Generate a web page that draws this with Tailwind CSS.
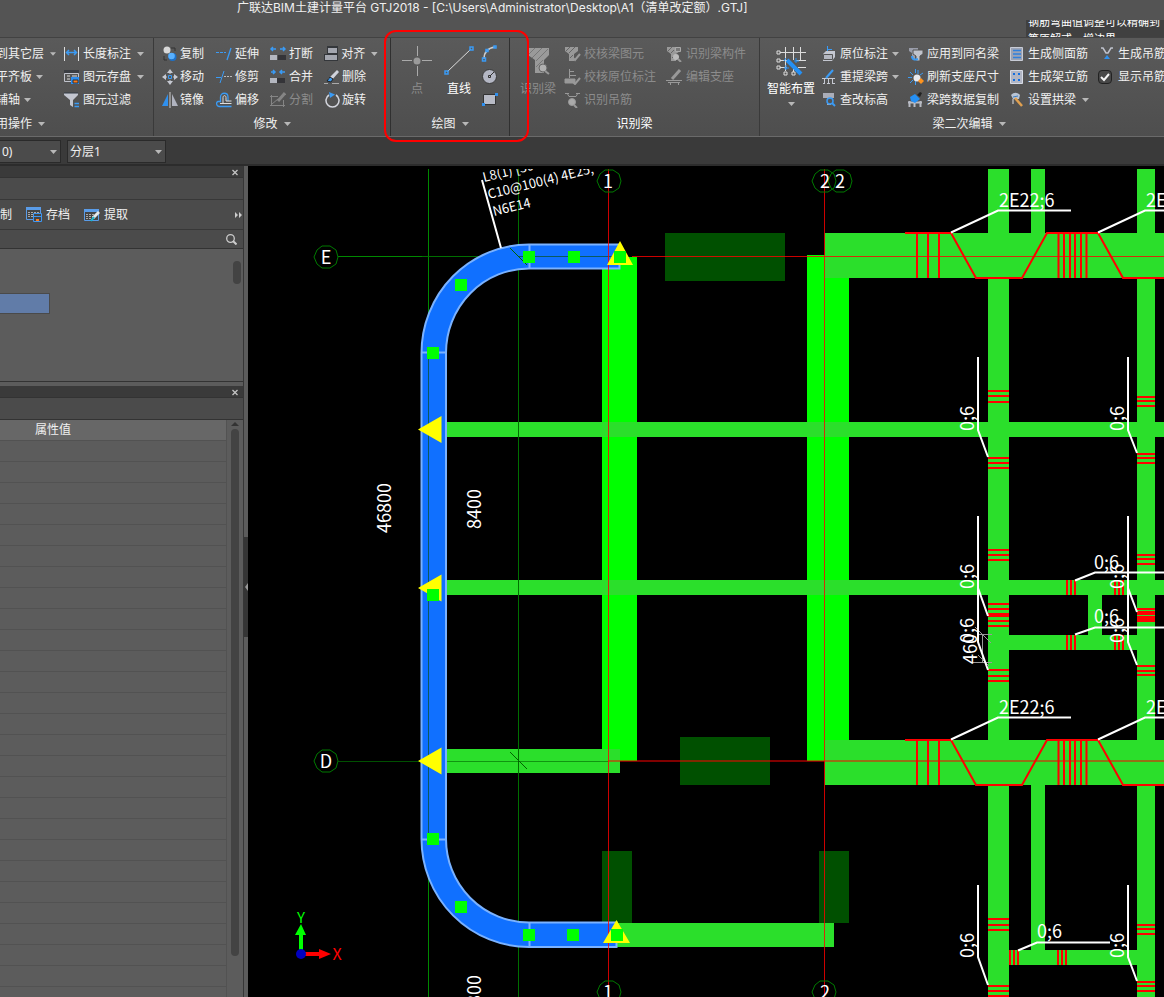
<!DOCTYPE html>
<html lang="zh-CN">
<head>
  <meta charset="UTF-8" />
  <meta name="viewport" content="width=device-width, initial-scale=1.0" />
  <title>广联达BIM土建计量平台 GTJ2018</title>
  <script src="https://cdn.jsdelivr.net/npm/@tailwindcss/browser@4"></script>
</head>

<body class="h-screen flex flex-col overflow-hidden bg-[#5c5c5c] text-xs text-[#f0f0f0] font-['Noto_Sans','Noto_Sans_CJK_SC',sans-serif]">
  <svg class="hidden" aria-hidden="true">
    <symbol id="caret" viewBox="0 0 7 4"><path d="M0 0h7L3.500 4z" fill="#b8b8b8" /></symbol>
    <symbol id="close" viewBox="0 0 8 8"><path d="M1.500 2l5 5M6.500 2l-5 5" stroke="#c4c4c4" stroke-width="1.300" /></symbol>
  </svg>

  <!-- Title bar -->
  <header class="h-[38px] shrink-0 flex justify-between bg-[#545454] border-b border-[#424242]">
    <h1 class="pl-[237px] h-4 leading-4 whitespace-nowrap font-['Inter','Noto_Sans_CJK_SC',sans-serif]">广联达BIM土建计量平台 GTJ2018 - [C:\Users\Administrator\Desktop\A1（清单改定额）.GTJ]</h1>
    <div class="self-end w-[138px] h-[17px] pl-0.5 bg-[#404040] overflow-hidden whitespace-nowrap text-[11px] text-white">
      <p class="-mt-1.5 h-[17px] leading-4">钢筋弯曲值调整可以精确到</p>
      <p class="h-4 leading-4">等原解或，增边界</p>
    </div>
  </header>

  <!-- Ribbon -->
  <nav class="relative h-[99px] shrink-0 flex overflow-hidden bg-gradient-to-b from-[#5a5a5a] to-[#4e4e4e] border-b border-[#6a6a6a] whitespace-nowrap">
    <!-- Common -->
    <section class="w-[154px] shrink-0 pt-1 flex flex-col border-r border-[#3a3a3a]">
      <div class="-ml-1 grid grid-flow-col grid-rows-3 auto-cols-max gap-x-2">
        <button class="h-[23px] flex items-center gap-1 w-15">到其它层<svg class="w-[7px] h-1 ml-0.5"><use href="#caret" /></svg></button>
        <button class="h-[23px] flex items-center gap-1 w-15">平齐板<svg class="w-[7px] h-1"><use href="#caret" /></svg></button>
        <button class="h-[23px] flex items-center gap-1 w-15">辅轴<svg class="w-[7px] h-1"><use href="#caret" /></svg></button>
        <button class="h-[23px] flex items-center gap-1">
          <svg width="15" height="16" fill="none"><path d="M.5 1v14M14.500 1v14" stroke="#ddd" /><path d="M3 6.500h9M5 4L2.500 6.500 5 9M10 4l2.500 2.500L10 9" stroke="#3a9bf5" stroke-width="1.500" /></svg>
          长度标注<svg class="w-[7px] h-1 ml-0.5"><use href="#caret" /></svg></button>
        <button class="h-[23px] flex items-center gap-1">
          <svg width="15" height="16" fill="none"><path d="M0 1h15v3H0z" fill="#3a3d42" /><path d="M.5 4.500h14v8H.5z" stroke="#c0c3cc" /><path d="M3 7h3M3 10h3M8 7h5" stroke="#ddd" /><path d="M7 8h8v7H7z" fill="#2b8cee" /><path d="M9 11h5v3H9z" fill="#ff7a1a" stroke="#333" /></svg>
          图元存盘<svg class="w-[7px] h-1 ml-0.5"><use href="#caret" /></svg></button>
        <button class="h-[23px] flex items-center gap-1">
          <svg width="15" height="16" fill="none"><path d="M0 1h14v2L9 8v7l-3-2V8L0 3z" fill="#c3c6d0" /><path d="M0 1h14" stroke="#333a44" /><path d="M10.500 11.500H15M10.500 14.500H15" stroke="#3a9bf5" stroke-width="1.500" /></svg>
          图元过滤</button>
      </div>
      <button class="-ml-1 h-[26px] flex items-center gap-1.5">用操作<svg class="w-[7px] h-1"><use href="#caret" /></svg></button>
    </section>

    <!-- Modify -->
    <section class="w-[237px] shrink-0 pt-1 flex flex-col border-r border-[#303030]">
      <div class="pl-2 grid grid-flow-col grid-rows-3 auto-cols-[54px]">
        <button class="h-[23px] flex items-center gap-0.5">
          <svg width="16" height="16"><circle cx="5" cy="4" r="3.500" fill="#d8d8d8" /><circle cx="10.500" cy="11" r="4" fill="#1d70c8" /><circle cx="9.500" cy="10" r="3.300" fill="#58b0ff" /><path d="M9 2h4v3M2 10v4h3" fill="none" stroke="#333" /></svg>复制</button>
        <button class="h-[23px] flex items-center gap-0.5">
          <svg width="16" height="16"><path d="M8 0l3 4H5zM8 16l3-4H5zM0 8l4-3v6zM16 8l-4-3v6z" fill="#c6c9d2" /><path d="M8 3v2M8 11v2M3 8h2M11 8h2" stroke="#c6c9d2" /><path d="M6.500 6.500h3v3h-3z" fill="none" stroke="#3a9bf5" /></svg>移动</button>
        <button class="h-[23px] flex items-center gap-0.5">
          <svg width="16" height="16"><path d="M6 2v12H0z" fill="#2f90ee" /><path d="M10 2v12h6z" fill="#b0b3bf" /><path d="M8 0v16" stroke="#ccc" /></svg>镜像</button>
        <button class="h-[23px] flex items-center gap-[3px]">
          <svg width="16" height="16" fill="none"><path d="M0 6.500h10" stroke="#3a9bf5" stroke-dasharray="3 1" /><path d="M15 2l-4 12" stroke="#3a9bf5" stroke-width="1.300" /></svg>延伸</button>
        <button class="h-[23px] flex items-center gap-[3px]">
          <svg width="16" height="16" fill="none"><path d="M0 8.500h5" stroke="#3a9bf5" /><path d="M8 7.500h8" stroke="#bbb" stroke-dasharray="2 1" /><path d="M8 2L4 14" stroke="#3a9bf5" /></svg>修剪</button>
        <button class="h-[23px] flex items-center gap-[3px]">
          <svg width="16" height="16" fill="none"><path d="M15.500 14.500H3C0 14 0 10 2 9.500h2.500V5C4.500 0 12 0 12 5v4" stroke="#3a9bf5" stroke-width="1.300" /><path d="M15.500 11.500H4M7 11V5.500C7 3 10 3 10 5.500V9h5.500" stroke="#ddd" /></svg>偏移</button>
        <button class="h-[23px] flex items-center gap-[3px]">
          <svg width="16" height="16"><path d="M0 9h7v5H0z" fill="#b4b7c0" /><path d="M8 9h8v5H8z" fill="#343438" /><path d="M1 3h5M3 1L1 3l2 2M10 3h5M13 1l2 2-2 2" fill="none" stroke="#3a9bf5" stroke-width="1.500" /></svg>打断</button>
        <button class="h-[23px] flex items-center gap-[3px]">
          <svg width="16" height="16"><path d="M0 9h7v5H0z" fill="#b4b7c0" /><path d="M7 9h8v5H7z" fill="#343438" /><path d="M1 3h4M3 1l2 2-2 2M10 3h5M12 1l-2 2 2 2" fill="none" stroke="#3a9bf5" stroke-width="1.500" /></svg>合并</button>
        <button disabled class="h-[23px] flex items-center gap-[3px] text-[#8c8c8c]">
          <svg width="16" height="16" fill="none" stroke="#858585"><path d="M0 4.500h8M1.500 3v11M0 13.500h15M13.500 8v7M2 12l6-5" /><path d="M15 1L8 9" stroke-width="3" /></svg>分割</button>
        <button class="h-[23px] flex items-center gap-0.5">
          <svg width="16" height="16"><path d="M3 0h11v8H3z" fill="#34373b" /><path d="M4 2h9v5H4z" fill="#a4a7b0" /><path d="M0 8h14v7H0z" fill="#34373b" /><path d="M1 9h12v5H1z" fill="#a4a7b0" /><path d="M15.500 0v16" stroke="#ddd" /></svg>对齐<svg class="w-[7px] h-1 ml-1"><use href="#caret" /></svg></button>
        <button class="h-[23px] flex items-center gap-0.5">
          <svg width="16" height="16"><path d="M13 1l2 2-8 9-3-2z" fill="#d0d3dc" /><path d="M6 8l3 2-2 3-4-1z" fill="#3a9bf5" stroke="#222" /><path d="M0 14.500h4M8 14.500h7" stroke="#aaa" /></svg>删除</button>
        <button class="h-[23px] flex items-center gap-0.5">
          <svg width="16" height="16" fill="none"><path d="M5 3a6.500 6.500 0 1 0 7 0" stroke="#d4d6de" stroke-width="1.500" /><path d="M5 0l6 2.500L6 6z" fill="#3a9bf5" /></svg>旋转</button>
      </div>
      <button class="h-[26px] flex items-center justify-center gap-1.5">修改<svg class="w-[7px] h-1"><use href="#caret" /></svg></button>
    </section>

    <!-- Draw -->
    <section class="w-[119px] shrink-0 pt-1 flex flex-col border-r border-[#303030]">
      <div class="h-[69px] flex pl-2.5">
        <button disabled class="w-8 flex flex-col items-center gap-[5px] pt-1 text-[#8c8c8c]">
          <svg width="30" height="30"><path d="M15.500 0v10M15.500 20v10M0 14.500h10M20 14.500h10" stroke="#aaa" /><circle cx="15" cy="15" r="3.500" fill="#9a9a9a" /></svg><span class="leading-4">点</span></button>
        <button class="w-[52px] flex flex-col items-center gap-[5px] pt-1 text-white">
          <svg width="30" height="30" fill="none"><path d="M3 26L27 3" stroke="#ddd" /><path d="M1 25h3v3H1zM26 1h3v3h-3z" stroke="#3a9bf5" stroke-width="1.500" /></svg><span class="leading-4">直线</span></button>
        <div class="flex flex-col -ml-1 shrink-0">
          <button class="h-[23px] w-[18px] flex items-center" aria-label="弧线"><svg width="17" height="17" fill="none"><path d="M3 14C3 7 7 3 14 2" stroke="#ccc" stroke-width="1.500" /><path d="M1.500 13h3v3h-3zM5 4.500h2v2H5zM13 1h2v2h-2z" stroke="#3a9bf5" stroke-width="1.500" /></svg></button>
          <button class="h-[23px] w-[18px] flex items-center" aria-label="圆"><svg width="17" height="17"><circle cx="8.500" cy="8.500" r="7" fill="#b4b7c4" stroke="#3a3a3a" /><path d="M9 8l4-4M7.500 7.500h2v2h-2z" fill="none" stroke="#333" /></svg></button>
          <button class="h-[23px] w-[18px] flex items-center" aria-label="矩形"><svg width="17" height="17"><path d="M2.500 3.500h12v10h-12z" fill="#b8bbc6" stroke="#333" /><path d="M1 12h3v3H1zM14 2h3v3h-3z" fill="#2f90ee" /></svg></button>
        </div>
      </div>
      <button class="h-[26px] flex items-center justify-center gap-1.5">绘图<svg class="w-[7px] h-1"><use href="#caret" /></svg></button>
    </section>

    <!-- Recognise beams -->
    <section class="w-[250px] shrink-0 pt-1 flex flex-col border-r border-[#3a3a3a]">
      <div class="h-[69px] flex pl-2.5">
        <button disabled class="w-9 mr-2 flex flex-col items-center gap-[5px] pt-1 text-[#8c8c8c]">
          <svg width="30" height="30"><path d="M5 2h21v7l-5 5v13h-9V14L5 9z" fill="#9a9a9a" /><path d="M6 8l6-6M9 12L19 2M13 15L25 3M13 21l7-7" stroke="#777" /><circle cx="20" cy="22" r="4" fill="#b0b0b0" stroke="#666" /><path d="M22 25l4 3" stroke="#999" stroke-width="2" /></svg><span class="leading-4">识别梁</span></button>
        <div class="grid grid-flow-col grid-rows-3 auto-cols-[102px] text-[#8c8c8c]">
          <button disabled class="h-[23px] flex items-center gap-[3px]"><svg width="17" height="16"><path d="M1 1h13v4l-4 3v7H5V8L1 5z" fill="#999" /><path d="M2 5l4-4M5 7l6-6M6 12l3-3" stroke="#666" /><path d="M8 11l3 3 5-6" fill="none" stroke="#999" stroke-width="2" /></svg>校核梁图元</button>
          <button disabled class="h-[23px] flex items-center gap-[3px]"><svg width="17" height="16" fill="none" stroke="#999"><path d="M5.500 0v9M5 2.500h5M5 6.500h7" /><path d="M1 10h10v4H1z" fill="#999" /><path d="M8 12l3 3 5-6" stroke-width="2" /></svg>校核原位标注</button>
          <button disabled class="h-[23px] flex items-center gap-[3px]"><svg width="17" height="16" fill="none" stroke="#999"><path d="M3 1l2 3.500h7L14 1M1 1.500h4M12 1.500h4" /><circle cx="8" cy="10" r="3.500" fill="#aaa" /><path d="M10 13l3 3" stroke-width="2" /></svg>识别吊筋</button>
          <button disabled class="h-[23px] flex items-center gap-[3px]"><svg width="17" height="16"><path d="M1 1h13v4l-4 3v7H5V8L1 5z" fill="#999" /><path d="M2 5l4-4M5 7l3-3M6 12l3-3" stroke="#666" /><path d="M9.500 1.500h5v4h-5z" fill="#777" stroke="#aaa" /><circle cx="10" cy="11" r="3" fill="#bbb" /><path d="M12 13l3 3" stroke="#999" stroke-width="2" /></svg>识别梁构件</button>
          <button disabled class="h-[23px] flex items-center gap-[3px]"><svg width="17" height="16" fill="none" stroke="#999"><path d="M0 11.500h16M2 13.500h12M4.500 14v2M12.500 14v2" /><path d="M14 1L6 10" stroke-width="3" /></svg>编辑支座</button>
        </div>
      </div>
      <h2 class="h-[30px] flex items-center justify-center text-white">识别梁</h2>
    </section>

    <!-- Beam secondary edit -->
    <section class="shrink-0 pt-1 flex flex-col">
      <div class="h-[69px] flex pl-1.5">
        <button class="w-[50px] mr-1.5 flex flex-col items-center gap-[5px] pt-1 text-white">
          <svg width="30" height="30" fill="none" class="shrink-0"><path d="M4 6.500h26M4 14.500h7M20 14.500h10M4 21.500h7M22 21.500h8M9.500 1v24M17.500 1v13M24.500 1v14M17.500 20v6" stroke="#ddd" /><path d="M1 5h3v3H1zM1 13h3v3H1zM1 20h3v3H1zM8 26h3v3H8zM16 26h3v3h-3z" stroke="#ddd" /><path d="M11 14l14 14" stroke="#2590f5" stroke-width="4" /><path d="M10 12l-2 3M20 12v5M18 15h5M10 19v5M8 22h5" stroke="#2590f5" /></svg><span class="leading-4">智能布置</span>
          <svg class="w-[7px] h-1"><use href="#caret" /></svg></button>
        <div class="grid grid-flow-col grid-rows-3 auto-cols-max">
          <button class="h-[23px] w-[86px] flex items-center gap-1"><svg width="14" height="16"><path d="M1 8l3-3h9v6l-3 4H1z" fill="#c4c7d0" /><path d="M1.500 8.500h9v5h-9z" fill="#b4b7c0" stroke="#555" /><path d="M5.500 0v5M5 3.500h5" stroke="#3a9bf5" /></svg>原位标注<svg class="w-[7px] h-1"><use href="#caret" /></svg></button>
          <button class="h-[23px] w-[86px] flex items-center gap-1"><svg width="14" height="16" fill="none"><path d="M0 9.500h13M2.500 10v4M6.500 10v4M10.500 10v4M1 14.500h2M5 14.500h3M10 14.500h3" stroke="#c6c9d2" /><path d="M11 1L4 9" stroke="#3a9bf5" stroke-width="2" /></svg>重提梁跨<svg class="w-[7px] h-1"><use href="#caret" /></svg></button>
          <button class="h-[23px] w-[86px] flex items-center gap-1"><svg width="14" height="16" fill="none"><path d="M1 1h11v5H9v7H5V6H1z" fill="#aaadb8" /><circle cx="8" cy="9" r="3" fill="#555" stroke="#3a9bf5" stroke-width="1.500" /><path d="M10 11l3 3" stroke="#3a9bf5" stroke-width="2" /></svg>查改标高</button>
          <button class="h-[23px] w-[102px] flex items-center gap-[3px]"><svg width="16" height="16"><path d="M1 2h9v4L7 8v5H4V7L1 5z" fill="#9a9daa" /><path d="M5 4h10v4l-3 2v5H8v-5L5 8z" fill="#c0c3cc" stroke="#555" /><path d="M4 10c0 4 3 4 6 3" stroke="#3a9bf5" stroke-width="2" fill="none" /></svg>应用到同名梁</button>
          <button class="h-[23px] w-[102px] flex items-center gap-[3px]"><svg width="16" height="16" fill="none"><path d="M7.500 0v4M0 8.500h4M10 1v4M2 3l3 3M5 11l-3 3M12 6l3-2M7.500 12v4" stroke="#3a9bf5" /><circle cx="9" cy="9" r="3.500" fill="#e8eaf0" /><path d="M13 9l3 3-3 3-3-3z" fill="#ff941f" /></svg>刷新支座尺寸</button>
          <button class="h-[23px] w-[102px] flex items-center gap-[3px]"><svg width="16" height="16" fill="none"><path d="M1.500 9v6M6.500 9v6M12.500 9v6M0 10.500h14" stroke="#b8bbc4" stroke-width="2" /><path d="M2 5l5-3 5 5-5 4-4-2z" fill="#2590f5" /><path d="M9 3l3-3 2 1-2 4z" fill="#222" /></svg>梁跨数据复制</button>
          <button class="h-[23px] w-[90px] flex items-center gap-1"><svg width="14" height="16" fill="none"><path d="M.5 1.500h12v13H.5z" fill="#9ca3b4" stroke="#c8ccd6" /><path d="M3 4.500h8M3 8h8M3 11.500h8" stroke="#2f80dc" stroke-width="1.500" /></svg>生成侧面筋</button>
          <button class="h-[23px] w-[90px] flex items-center gap-1"><svg width="14" height="16"><path d="M.5 1.500h12v13H.5z" fill="#b0b5c4" stroke="#d8dce6" /><path d="M3 4h2v2H3zM8 4h2v2H8zM3 10h2v2H3zM8 10h2v2H8z" fill="#126ee0" /></svg>生成架立筋</button>
          <button class="h-[23px] w-[90px] flex items-center gap-1"><svg width="14" height="16" fill="none"><path d="M1 3c3-3 6-3 9 0l-1 4H3z" fill="#b8c4d4" /><path d="M3 7v5" stroke="#999" stroke-width="2" /><path d="M5 6l7 8" stroke="#e0a050" stroke-width="2.500" /><path d="M3 5l5-1" stroke="#3a7cc0" /></svg>设置拱梁<svg class="w-[7px] h-1 ml-0.5"><use href="#caret" /></svg></button>
          <button class="h-[23px] flex items-center gap-1"><svg width="14" height="16" fill="none"><path d="M1 2h2l3 5h2l3-5h2" stroke="#bfc2cc" stroke-width="1.500" /><path d="M7 9l3 4H4z" fill="#2f90ee" /></svg>生成吊筋</button>
          <label class="h-[23px] -ml-0.5 flex items-center gap-1.5">
            <span class="relative flex w-3.5 h-3.5">
              <input type="checkbox" checked class="peer appearance-none w-3.5 h-3.5 border border-[#222] rounded-sm bg-[#484848]" />
              <svg class="absolute inset-0 pointer-events-none opacity-0 peer-checked:opacity-100" width="14" height="14" fill="none"><path d="M3 7l3 3 5-6" stroke="#f4f4f4" stroke-width="2" /></svg>
            </span>显示吊筋</label>
        </div>
      </div>
      <button class="h-[26px] pl-3 flex items-center justify-center gap-1.5">梁二次编辑<svg class="w-[7px] h-1"><use href="#caret" /></svg></button>
    </section>
  </nav>

  <!-- Highlight round the draw group -->
  <div class="absolute left-[384px] top-[30px] w-[145px] h-28 border-2 border-[#ff0000] rounded-xl pointer-events-none"></div>

  <!-- Floor / layer selectors -->
  <div class="h-[29px] pt-0.5 shrink-0 flex items-center gap-1.5 bg-[#3a3a3a] border-b-2 border-[#2c2c2c]">
    <div class="relative w-[61px]">
      <select aria-label="楼层" class="appearance-none w-full h-[23px] pl-0.5 bg-[#4b4b4b] border border-l-0 border-[#2a2a2a]"><option>0)</option></select>
      <svg class="absolute right-1 top-2.5 w-[7px] h-1 pointer-events-none"><use href="#caret" /></svg>
    </div>
    <div class="relative w-[99px]">
      <select aria-label="分层" class="appearance-none w-full h-[23px] pl-0.5 bg-[#4b4b4b] border border-[#2a2a2a]"><option>分层1</option></select>
      <svg class="absolute right-1 top-2.5 w-[7px] h-1 pointer-events-none"><use href="#caret" /></svg>
    </div>
  </div>

  <main class="flex flex-1 min-h-0">
    <!-- Left docks -->
    <aside class="w-[244px] shrink-0 flex flex-col border-r border-[#363636]">
      <section class="h-[216px] shrink-0 flex flex-col border-b border-[#333]">
        <div class="h-3 flex items-center justify-end pr-1 bg-[#3a3a3a] border-b border-[#333]"><button aria-label="关闭"><svg class="w-2 h-2 block"><use href="#close" /></svg></button></div>
        <div class="h-[22px] bg-[#4b4b4b] border-b border-[#383838]"></div>
        <div class="h-[30px] flex items-center bg-[#4b4b4b] border-b border-[#383838]">
          <button class="w-[26px] text-left">制</button>
          <button class="w-[58px] flex items-center gap-1"><svg width="16" height="16"><path d="M.5.500h14v12H.5z" fill="#444" stroke="#5a9ce8" /><path d="M0 0h15v3H0z" fill="#5a9ce8" /><path d="M2 5.500h11M2 7.500h11M2 9.500h6" stroke="#aaa" stroke-dasharray="2 1" /><path d="M7.500 6.500h8v8h-8z" fill="#444" stroke="#3f96f0" /><path d="M8 9.500h7" stroke="#3f96f0" /><path d="M10 12h3v2h-3z" fill="#ff7a1a" /></svg>存档</button>
          <button class="flex items-center gap-1"><svg width="16" height="16"><path d="M.5 2.500h14v11H.5z" fill="#444" stroke="#5a9ce8" /><path d="M0 2h15v3H0z" fill="#5a9ce8" /><path d="M2 7.500h9M2 9.500h7M2 11.500h5" stroke="#aaa" stroke-dasharray="2 1" /><path d="M15 5l-6 6" stroke="#e4e8ec" stroke-width="3" /><path d="M10 10l-3 4" stroke="#18b8d0" stroke-width="2" /></svg>提取</button>
          <button class="ml-auto" aria-label="更多"><svg width="8" height="8"><path d="M0 1l3 3-3 3zM4 1l3 3-3 3z" fill="#ccc" /></svg></button>
        </div>
        <div class="h-[19px] flex items-center bg-[#4b4b4b] border-b border-[#333]">
          <input type="search" aria-label="搜索" class="flex-1 min-w-0 h-4 bg-transparent outline-none" />
          <button class="pr-1.5" aria-label="搜索"><svg width="11" height="11" fill="none" stroke="#ccc"><circle cx="4.500" cy="4.500" r="3.800" stroke-width="1.300" /><path d="M7 7l3.500 3.500" stroke-width="2" /></svg></button>
        </div>
        <div class="flex-1 flex justify-between">
          <div class="mt-11 w-[50px] h-[21px] bg-[#617ca8] border border-l-0 border-[#4a4a4a]"></div>
          <div class="mt-3 mr-0.5 w-2 h-[23px] rounded bg-[#434343]"></div>
        </div>
      </section>

      <section class="mt-1 flex-1 min-h-0 flex flex-col">
        <div class="h-3 shrink-0 flex items-center justify-end pr-1 bg-[#3a3a3a] border-b border-[#333]"><button aria-label="关闭"><svg class="w-2 h-2 block"><use href="#close" /></svg></button></div>
        <div class="h-[22px] shrink-0 bg-[#4b4b4b] border-b border-[#333]"></div>
        <div class="flex-1 min-h-0 flex overflow-hidden">
          <div class="w-[227px] border-r border-[#525252] overflow-hidden">
            <table class="w-full border-separate border-spacing-0">
              <thead><tr><th class="h-[21px] p-0 pl-[35px] bg-[#676767] border-b border-[#525252] leading-5 text-left font-normal">属性值</th></tr></thead>
              <tbody id="props"></tbody>
            </table>
          </div>
          <div class="flex-1 flex flex-col items-center pt-0.5 pb-[41px] gap-[3px]">
            <svg width="8" height="4" class="shrink-0"><path d="M4 0l4 4H0z" fill="#333" /></svg>
            <div class="w-2 flex-1 rounded bg-[#434343]"></div>
          </div>
        </div>
      </section>
    </aside>
    <div class="w-1 shrink-0 pt-2.5 flex flex-col justify-center bg-[#5c5c5c]">
      <button class="h-[100px] w-1 flex items-center bg-[#353535]" aria-label="折叠"><svg width="4" height="8"><path d="M4 0v8L1 4z" fill="#999" /></svg></button>
    </div>

    <!-- Drawing area -->
    <svg class="flex-1 min-w-0 h-full bg-black font-['Noto_Sans_CJK_SC',sans-serif]" viewBox="248 166 916 831" preserveAspectRatio="xMinYMin slice" fill="none">
      <clipPath id="view"><path d="M248 169h916v828H248z" /></clipPath>
      <g clip-path="url(#view)">
        <!-- columns and walls -->
        <path fill="#005000" d="M665 233h120v48H665zM680 737h90v48h-90zM602 851h30v72h-30zM819 851h30v72h-30z" />
        <path fill="#00ff00" d="M602 257h35v504h-35zM807 255h42v485h-24v21h-18z" />
        <!-- beams -->
        <path fill="#2bdf2b" d="M446 422h718v15H446zM446 580h718v15H446zM446 749h174v24H446zM617 923h217v24H617zM825 233h339v45H825zM825 740h339v45H825zM988 169h21v828h-21zM1137 169h18v828h-18zM1031 169h14v64h-14zM1031 785h14v165h-14zM1088 595h14v40h-14zM1009 635h128v15h-128zM1009 950h128v15h-128z" />
        <!-- axes -->
        <path stroke="#008800" d="M428.500 169v828M338 256.500h84" />
        <path stroke="#006e00" d="M518.500 169v828M422 256.500h96" />
        <path stroke="#005000" d="M338 761.500h84" />
        <path stroke="#006400" stroke-opacity=".6" d="M446 761.500h162" />
        <path stroke="#ff0000" stroke-opacity=".8" d="M824.500 169v828M632 256.500h532" />
        <path stroke="#ff0000" stroke-opacity=".5" stroke-width="2" d="M608 761h556" />

        <!-- selected beam -->
        <path fill="#1070ff" stroke="#7ab2ff" stroke-width="2" d="M619.500 244.500H529A107.500 108.500 0 0 0 421.500 353V839A107.500 108 0 0 0 529 947H616.500V922.500H529A83 83.500 0 0 1 446 839V353A83 84.500 0 0 1 529 268.500H619.500z" />
        <path stroke="#7ab2ff" stroke-width="2" d="M529.500 244v25M529.500 922v25M421 352.500h25M421 839.500h25" />
        <path stroke="#0a5a60" d="M428.500 354v485M518 256.500h100" />
        <path stroke="#006400" d="M510 248l17 17M510 752l17 17" />
        <path stroke="#ff0000" stroke-opacity=".8" d="M608.500 169v828" />
        <path fill="#ffff00" d="M620 241l13 24h-26zM616.500 920l13.500 23h-27zM418 429.500l23.500-13.500v27zM418 588l23.500-13.500v27zM418 761l23.500-13.500v27z" />
        <path fill="#00ff00" d="M523 251h12v12h-12zM568 251h12v12h-12zM614 251h12v12h-12zM455 279h12v12h-12zM427 347h12v12h-12zM427 589h12v12h-12zM427 833h12v12h-12zM455 901h12v12h-12zM523 929h12v12h-12zM567 929h12v12h-12zM611 929h12v12h-12z" />

        <!-- hanger bars -->
        <g id="truss" stroke="#ff0000" stroke-width="2">
          <path d="M905 233h46l25 45h46l25-45h51l25 45h41M917 233v45M928 233v45M939 233v45M1058.500 233v45M1064 233v45M1070 233v45M1075 233v45M1081 233v45M1086.500 233v45" />
        </g>
        <use href="#truss" y="507" />
        <g stroke="#ff0000" stroke-width="2">
          <path d="M988 391h21m-21 5h21m-21 6h21M988 458h21m-21 5h21m-21 5h21M988 550h21m-21 5h21m-21 5h21M988 604h21m-21 5h21m-21 5h21m-21 2h21m-21 5h21m-21 5h21M988 670h21m-21 6h21m-21 5h21M988 919h21m-21 6h21m-21 5h21M988 986h21m-21 5h21m-21 5h21" />
          <path d="M1137 397h18m-18 4h18m-18 5h18M1137 454h18m-18 4h18m-18 5h18M1137 555h18m-18 4h18m-18 5h18M1137 609h18m-18 3h18m-18 2h18m-18 3h18m-18 2h18m-18 2h18M1137 666h18m-18 5h18m-18 4h18M1137 925h18m-18 4h18m-18 5h18M1137 982h18m-18 4h18m-18 5h18" />
          <path d="M1067 580v15m4-15v15m4-15v15M1115 580v15m4-15v15m4-15v15M1067 635v15m4-15v15m4-15v15M1115 635v15m4-15v15m4-15v15M1010 950v15m4-15v15m4-15v15M1058 950v15m4-15v15m4-15v15" />
        </g>

        <!-- leaders -->
        <path stroke="#999" d="M978 634.500h14M972 662.500h20M982.500 634v29M975 627l16 16M978 655l11 11" />
        <path stroke="#ffffff" stroke-width="2" d="M1071 210.500h-73l-47 22M1164 210.500h-19l-47 22M1071 717.500h-73l-47 22M1164 717.500h-19l-47 22M978 357v73l10 27M1128 357v73l9 23M978 516v72l10 28M1128 516v72l9 24M978 588v54l10 28M1128 588v54l9 23M978 885v72l10 28M1128 885v72l9 24M1164 572.500h-69l-20 8M1164 627.500h-69l-20 7M1110 942.500h-73l-19 8M482 180l19 68" />

        <!-- grid bubbles -->
        <g stroke="#007a00">
          <path id="bubble" d="M338 257l-2 7-6 4h-8l-5-4-3-7 3-7 5-4h8l6 4z" />
          <use href="#bubble" y="504" /><use href="#bubble" x="283" y="-76" /><use href="#bubble" x="498" y="-76" /><use href="#bubble" x="514" y="-76" /><use href="#bubble" x="283" y="735" /><use href="#bubble" x="498" y="735" />
        </g>

        <g fill="#ffffff" font-size="18">
          <g text-anchor="middle">
            <text x="326" y="264">E</text><text x="326" y="768">D</text>
            <text x="608" y="188">1</text><text x="825" y="188">2</text><text x="840" y="188">2</text>
            <text x="608" y="999">1</text><text x="825" y="999">2</text>
            <text transform="translate(391 508) rotate(-90)">46800</text>
            <text transform="translate(481 509) rotate(-90)">8400</text>
          </g>
          <text transform="translate(481 1015) rotate(-90)">8300</text>
          <text x="999" y="207">2E22;6</text><text x="1146" y="207">2E22;6</text>
          <text x="999" y="714">2E22;6</text><text x="1146" y="714">2E22;6</text>
          <text x="1094" y="569">0;6</text><text x="1094" y="623">0;6</text><text x="1037" y="938">0;6</text>
          <text transform="translate(974 431) rotate(-90)">0;6</text><text transform="translate(1124 431) rotate(-90)">0;6</text>
          <text transform="translate(974 589) rotate(-90)">0;6</text><text transform="translate(1124 589) rotate(-90)">0;6</text>
          <text transform="translate(974 643) rotate(-90)">0;6</text><text transform="translate(1124 643) rotate(-90)">0;6</text>
          <text transform="translate(974 958) rotate(-90)">0;6</text><text transform="translate(1124 958) rotate(-90)">0;6</text>
          <text transform="translate(977 664) rotate(-90)">460</text>
          <g font-size="13">
            <text transform="translate(484 182) rotate(-14)">L8(1) [300*600</text>
            <text transform="translate(489 199) rotate(-14)">C10@100(4) 4E25;</text>
            <text transform="translate(494 216) rotate(-14)">N6E14</text>
          </g>
        </g>

        <!-- UCS icon -->
        <path fill="#00ff00" d="M299 950v-15h-4l6-11 5 11h-3v15z" />
        <path fill="#ff0000" d="M305 952h14v-3l12 5-12 5v-3h-14z" />
        <circle cx="301" cy="954" r="5" fill="#0000c0" />
        <text x="301" y="923" font-size="15" text-anchor="middle" fill="#00ff00">Y</text>
        <text x="337" y="960" font-size="16" text-anchor="middle" fill="#ff0000">X</text>
      </g>
    </svg>
  </main>

  <script>
    const props = document.getElementById('props');
    for (let i = 0; i < 27; i++) {
      props.insertAdjacentHTML('beforeend', '<tr><td class="h-[21px] p-0 border-b border-[#525252]"></td></tr>');
    }
  </script>
</body>
</html>
